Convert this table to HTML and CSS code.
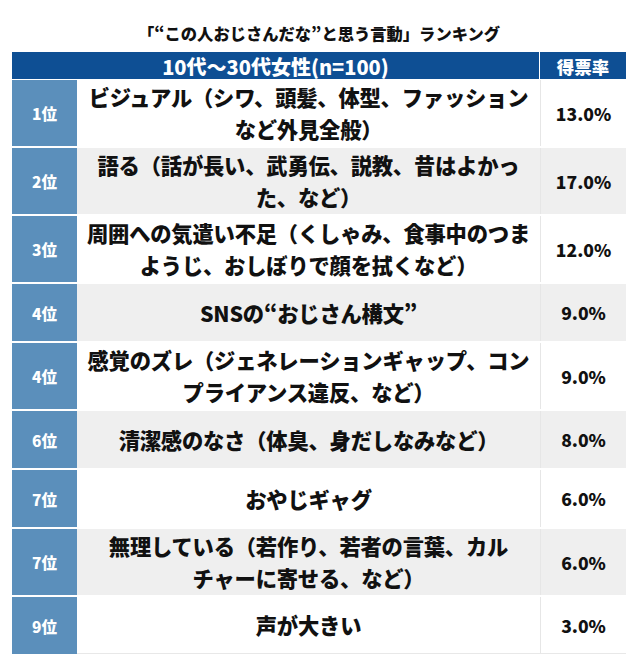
FILE: index.html
```html
<!DOCTYPE html>
<html lang="ja">
<head>
<meta charset="utf-8">
<link rel="stylesheet" href="styles.css">
</head>
<body>
<div class="page">
  <h1 class="title">「“この人おじさんだな”と思う言動」ランキング</h1>
  <div class="table">
    <div class="row head">
      <div class="h-main">10代〜30代女性(n=100)</div>
      <div class="h-pct">得票率</div>
    </div>
    <div class="row tall">
      <div class="rank">1位</div>
      <div class="item">ビジュアル（シワ、頭髪、体型、ファッション<br>など外見全般）</div>
      <div class="pct">13.0%</div>
    </div>
    <div class="row tall alt">
      <div class="rank">2位</div>
      <div class="item">語る（話が長い、武勇伝、説教、昔はよかっ<br>た、など）</div>
      <div class="pct">17.0%</div>
    </div>
    <div class="row tall">
      <div class="rank">3位</div>
      <div class="item">周囲への気遣い不足（くしゃみ、食事中のつま<br>ようじ、おしぼりで顔を拭くなど）</div>
      <div class="pct">12.0%</div>
    </div>
    <div class="row alt">
      <div class="rank">4位</div>
      <div class="item">SNSの“おじさん構文”</div>
      <div class="pct">9.0%</div>
    </div>
    <div class="row tall">
      <div class="rank">4位</div>
      <div class="item">感覚のズレ（ジェネレーションギャップ、コン<br>プライアンス違反、など）</div>
      <div class="pct">9.0%</div>
    </div>
    <div class="row alt">
      <div class="rank">6位</div>
      <div class="item">清潔感のなさ（体臭、身だしなみなど）</div>
      <div class="pct">8.0%</div>
    </div>
    <div class="row">
      <div class="rank">7位</div>
      <div class="item">おやじギャグ</div>
      <div class="pct">6.0%</div>
    </div>
    <div class="row tall alt">
      <div class="rank">7位</div>
      <div class="item">無理している（若作り、若者の言葉、カル<br>チャーに寄せる、など）</div>
      <div class="pct">6.0%</div>
    </div>
    <div class="row last">
      <div class="rank">9位</div>
      <div class="item">声が大きい</div>
      <div class="pct">3.0%</div>
    </div>
  </div>
</div>
</body>
</html>
```

FILE: styles.css
```css
* { box-sizing: border-box; }
html, body {
  margin: 0;
  padding: 0;
  background: #ffffff;
}
body {
  font-family: "Noto Sans CJK JP", "Noto Sans", sans-serif;
  color: #111111;
}
.page {
  width: 640px;
  padding: 22px 14px 0 12px;
}
.title {
  margin: 0 0 8px 0;
  font-size: 16.3px;
  line-height: 22px;
  font-weight: 900;
  text-align: center;
  color: #111;
}
.table {
  display: flex;
  flex-direction: column;
  gap: 2px;
  width: 614px;
}
.row {
  display: grid;
  grid-template-columns: 65px 463px 86px;
  height: 57px;
}
.row.tall { height: 66px; }
.row.head {
  grid-template-columns: 528px 86px;
  height: 27px;
  margin-bottom: -1px;
  background: #0e4f94;
  color: #fff;
  font-weight: 900;
}
.h-main, .h-pct {
  display: flex;
  align-items: center;
  justify-content: center;
}
.h-main {
  font-size: 20px;
  border-right: 1px solid #ffffff;
}
.h-pct {
  font-size: 17.5px;
}
.rank {
  background: #5b8fbb;
  color: #fff;
  font-weight: 900;
  font-size: 15.5px;
  display: flex;
  align-items: center;
  justify-content: center;
}
.item {
  display: flex;
  align-items: center;
  justify-content: center;
  text-align: center;
  font-weight: 900;
  font-size: 21.3px;
  line-height: 32px;
  white-space: nowrap;
  letter-spacing: -0.2px;
}
.pct {
  display: flex;
  align-items: center;
  justify-content: center;
  font-weight: 900;
  font-size: 17.5px;
  border-left: 1px solid #e6e6e6;
}
.row.alt .item, .row.alt .pct { background: #efefef; }
.row.last .item, .row.last .pct { border-bottom: 1px solid #e8e8e8; }
```
